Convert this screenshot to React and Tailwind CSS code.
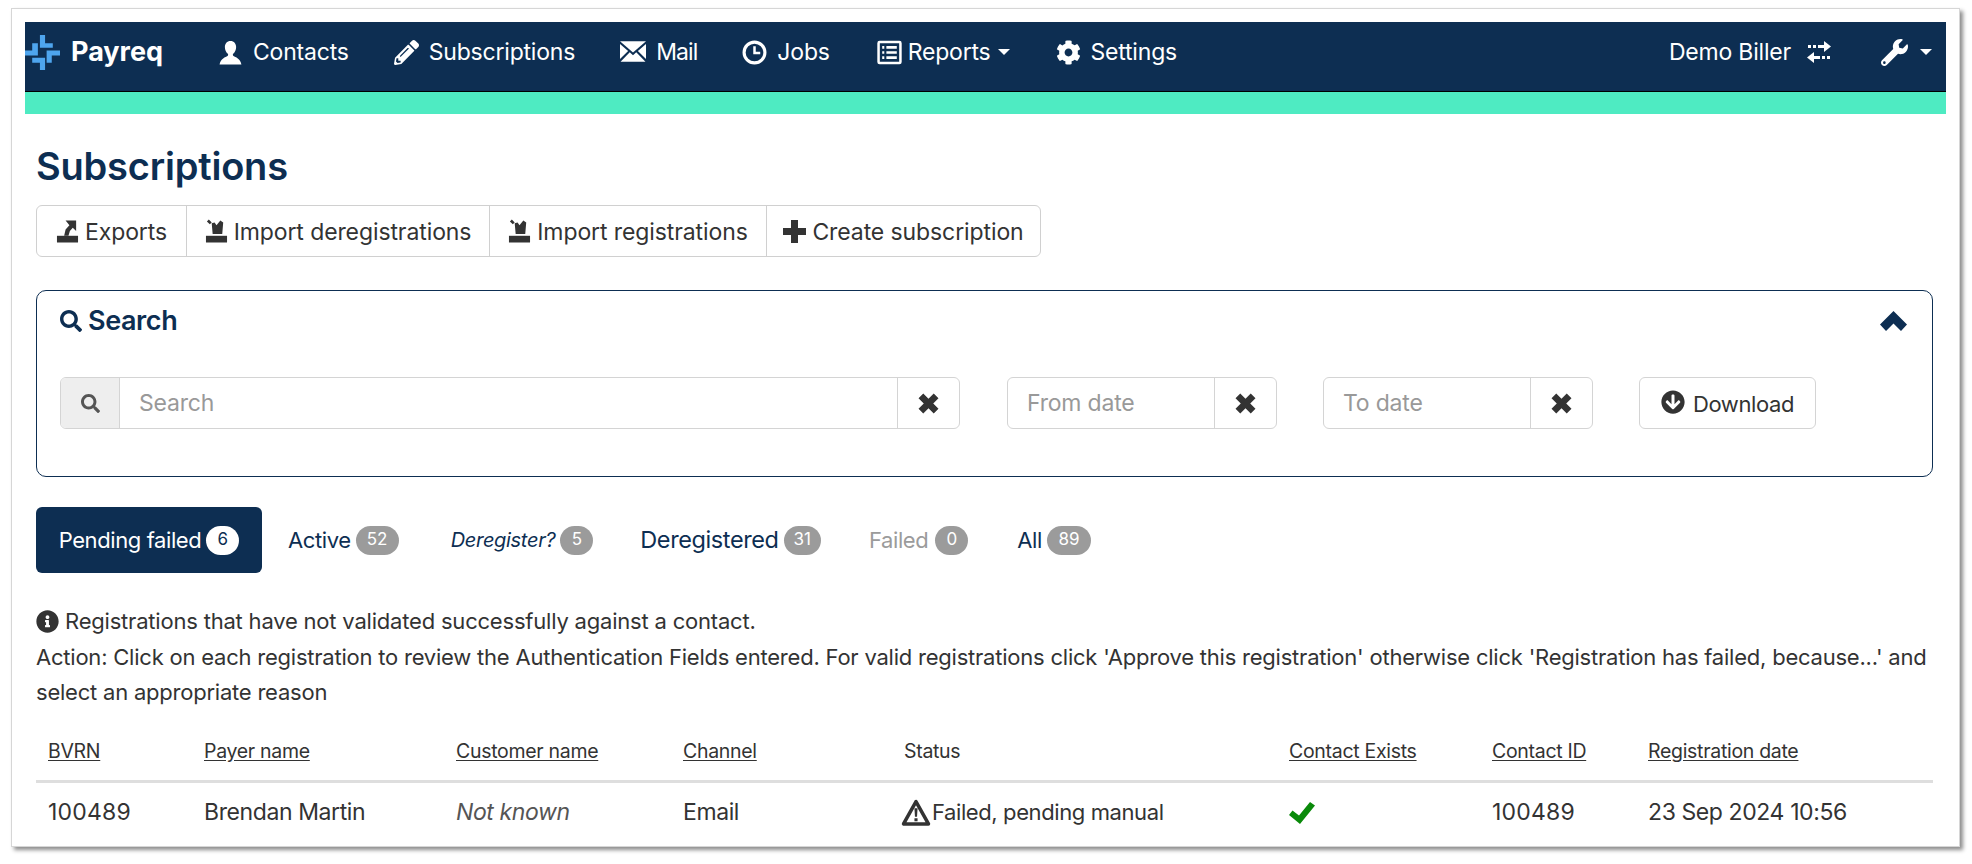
import React from "react";
import { FaCog, FaWrench, FaSearch, FaInfoCircle, FaArrowCircleDown, FaPencilAlt } from "react-icons/fa";

const NAVY = "text-[#0d2e52]";

function UserIcon() {
  return (
    <svg viewBox="0 0 24 24" className="w-[25px] h-[25px]" fill="currentColor">
      <path d="M12 1c-3.400 0-5.400 2.600-5.400 5.800 0 2.600 1 5 2.800 6.400.5.500.5 1.500-.3 2.100C7.300 16.500 2.500 17.500 1.500 23.500h21c-1-6-5.800-7-7.600-8.200-.8-.6-.8-1.600-.3-2.100 1.800-1.400 2.800-3.800 2.800-6.400C17.400 3.600 15.400 1 12 1z" />
    </svg>
  );
}

function MailIcon() {
  return (
    <svg viewBox="0 0 24 20" className="w-[26px] h-[22px]" fill="currentColor">
      <path d="M0 0h24L12 10.500 0 0z" />
      <path d="M0 2.500 7.500 9 0 16.500V2.500zM24 2.500 16.500 9 24 16.500V2.500z" />
      <path d="M9 10.300l3 2.700 3-2.700 8.500 8.700H.5L9 10.300z" />
    </svg>
  );
}

function ClockIcon() {
  return (
    <svg viewBox="0 0 24 24" className="w-[25px] h-[25px]" fill="none" stroke="currentColor">
      <circle cx="12" cy="12" r="10" strokeWidth="3" />
      <path d="M12 6v6.500h5.500" strokeWidth="2.400" />
    </svg>
  );
}

function ListIcon() {
  return (
    <svg viewBox="0 0 24 24" className="w-[25px] h-[25px]" fill="none" stroke="currentColor">
      <rect x="1.500" y="2" width="21" height="20" rx="1" strokeWidth="2.400" />
      <path d="M5 7h2M5 12h2M5 17h2M9 7h10M9 12h10M9 17h10" strokeWidth="2.600" />
    </svg>
  );
}

function LogoIcon() {
  return (
    <svg viewBox="0 0 34 34" className="w-[35px] h-[35px]" fill="#4ea5ee">
      <path d="M14.500 0h5v8h7.500v4.500H14.500z" />
      <path d="M7 8h5.500v12H0v-5h7z" />
      <path d="M21 15h13v5h-8v7h-5z" />
      <path d="M7 22h12.500v12h-5v-7H7z" />
    </svg>
  );
}

function TransferIcon() {
  return (
    <svg viewBox="0 0 24 22" className="w-[24px] h-[22px] ml-[16px]" fill="currentColor">
      <path d="M1 4h3v3H1zM6 4h3v3H6zM11 4h6V0l7 5.500-7 5.500V7h-6z" />
      <path d="M20 15h3v3h-3zM15 15h3v3h-3zM13 15H7v-4L0 16.500 7 22v-4h6z" />
    </svg>
  );
}

function ExportIcon() {
  return (
    <svg viewBox="0 0 24 24" className="w-[23px] h-[24px]" fill="#333">
      <path d="M10 1h11v11l-3.500-3.500-3 3.500-1.500 5H8.500l1.500-6.500 4-4.500z" />
      <path d="M1 17h22v7H1z" />
    </svg>
  );
}

function ImportIcon() {
  return (
    <svg viewBox="0 0 24 24" className="w-[23px] h-[24px]" fill="#333">
      <path d="M4 0l3 3-2 2-3-3zM7 4l3-1 2 3 4-5 3 2-1 12H8z" />
      <path d="M1 17h22v7H1z" />
    </svg>
  );
}

function PlusIcon() {
  return (
    <svg viewBox="0 0 23 23" className="w-[23px] h-[23px]" fill="#333">
      <path d="M8 0h7v8h8v7h-8v8H8v-8H0V8h8z" />
    </svg>
  );
}

function RemoveIcon() {
  return (
    <svg viewBox="0 0 20 20" className="w-[21px] h-[21px]" fill="currentColor">
      <path d="M5 0.500 10 5.500 15 0.500 19.500 5 14.500 10 19.500 15 15 19.500 10 14.500 5 19.500 0.500 15 5.500 10 0.500 5z" />
    </svg>
  );
}

function ChevronIcon() {
  return (
    <svg viewBox="0 0 27 20" className="w-[27px] h-[20px] mr-[2px]" fill="currentColor">
      <path d="M13.500 0 27 13.500 21 20 13.500 12.500 6 20 0 13.500z" />
    </svg>
  );
}

function WarningIcon() {
  return (
    <svg viewBox="0 0 28 26" className="w-[30px] h-[27px] ml-[-3px]">
      <path d="M14 2.500 2 24h24z" fill="none" stroke="#333" strokeWidth="3.400" strokeLinejoin="round" />
      <path d="M12.500 9h3l-.5 8h-2zM12.500 18.500h3v3h-3z" fill="#333" />
    </svg>
  );
}

function CheckIcon() {
  return (
    <svg viewBox="0 0 26 22" className="w-[26px] h-[22px]" fill="#0a8a0a">
      <path d="M21 0l5 3.500L11 22 0 13l3.500-4.500 6.500 5z" />
    </svg>
  );
}

function Caret({ className }) {
  return <span className={`inline-block w-0 h-0 border-x-[6px] border-x-transparent border-t-[6px] border-t-white ${className}`} />;
}

function NavItem({ icon, label, caret, gap = "gap-[10px]", className = "", labelClass = "tracking-[-0.2px]" }) {
  return (
    <div className={`flex items-center ${gap} ${className}`}>
      {icon}
      <span className={`text-[23px] ${labelClass}`}>{label}</span>
      {caret && <Caret className="ml-[1px]" />}
    </div>
  );
}

function Badge({ children, className = "bg-[#9b9b9b] text-white" }) {
  return (
    <span className={`h-[29px] min-w-[33px] px-[10px] rounded-full flex items-center justify-center text-[17px] ${className}`}>
      {children}
    </span>
  );
}

function Tab({ label, count, className, labelClass = "text-[22px] tracking-[-0.4px]", badgeClass }) {
  return (
    <div className={`flex items-center gap-[5px] ${className}`}>
      <span className={labelClass}>{label}</span>
      <Badge className={badgeClass}>{count}</Badge>
    </div>
  );
}

function ClearButton() {
  return (
    <div className="w-[62px] h-full shrink-0 flex items-center justify-center border-l border-[#d4d4d4] text-[#333]">
      <RemoveIcon />
    </div>
  );
}

function GroupButton({ icon, label, className }) {
  return (
    <div className={`h-full flex items-center justify-center gap-[6px] text-[23px] tracking-[-0.1px] text-[#333] ${className}`}>
      {icon}
      <span className="mt-[2px]">{label}</span>
    </div>
  );
}

const columns = "grid grid-cols-[156px_252px_227px_221px_385px_203px_156px_1fr] pl-[12px]";
const placeholder = "flex-1 pl-[19px] flex items-center text-[23px] tracking-[-0.2px] text-[#999]";

export default function App() {
  return (
    <div className="h-[864px] w-full bg-white overflow-hidden font-['Inter',sans-serif] pl-[11px] pr-[12px] pt-[8px]">
      <div className="h-[839px] border border-[#d6d6d6] bg-white shadow-[3px_3px_4px_rgba(0,0,0,0.45)] pt-[13px] px-[13px] overflow-hidden">
        <div className="h-[70px] bg-[#0d2e52] text-white flex items-start pt-[12px] border-b border-black">
          <div className="flex items-center h-[36px] w-[193px]">
            <LogoIcon />
            <span className="ml-[11px] text-[27px] font-bold">Payreq</span>
          </div>
          <div className="flex items-center h-[36px] gap-[45px]">
            <NavItem icon={<UserIcon />} label="Contacts" />
            <NavItem icon={<FaPencilAlt className="w-[25px] h-[25px]" />} label="Subscriptions" />
            <NavItem icon={<MailIcon />} label="Mail" labelClass="tracking-[-0.9px]" />
            <NavItem icon={<ClockIcon />} label="Jobs" />
            <NavItem icon={<ListIcon />} label="Reports" caret gap="gap-[6px]" className="ml-[2px]" />
            <NavItem icon={<FaCog className="w-[25px] h-[25px]" />} label="Settings" className="ml-[1px]" />
          </div>
          <div className="ml-auto flex items-center h-[36px] pr-[14px]">
            <span className="text-[23px] tracking-[-0.2px]">Demo Biller</span>
            <TransferIcon />
            <FaWrench className="ml-[50px] w-[27px] h-[27px]" />
            <Caret className="ml-[12px]" />
          </div>
        </div>
        <div className="h-[22px] bg-[#4eebc2]" />

        <div className="px-[11px]">
          <h1 className={`mt-[29px] h-[46px] flex items-center text-[38px] font-semibold tracking-[-0.2px] ${NAVY}`}>Subscriptions</h1>

          <div className="mt-[16px] w-[1005px] h-[52px] flex border border-[#d0d0d0] rounded-[6px]">
            <GroupButton icon={<ExportIcon />} label="Exports" className="w-[150px] border-r border-[#d0d0d0]" />
            <GroupButton icon={<ImportIcon />} label="Import deregistrations" className="w-[303px] border-r border-[#d0d0d0]" />
            <GroupButton icon={<ImportIcon />} label="Import registrations" className="w-[277px] border-r border-[#d0d0d0]" />
            <GroupButton icon={<PlusIcon />} label="Create subscription" className="flex-1" />
          </div>

          <div className="mt-[33px] h-[187px] mr-[2px] border border-[#0d2e52] rounded-[10px] px-[23px] pt-[9px]">
            <div className={`flex items-center justify-between h-[42px] ${NAVY}`}>
              <div className="flex items-center gap-[6px]">
                <FaSearch className="w-[22px] h-[22px]" />
                <span className="text-[27px] font-semibold tracking-[-0.4px]">Search</span>
              </div>
              <ChevronIcon />
            </div>
            <div className="mt-[35px] flex h-[52px]">
              <div className="w-[900px] h-full flex border border-[#d4d4d4] rounded-[6px] overflow-hidden">
                <div className="w-[59px] shrink-0 bg-[#eeeeee] border-r border-[#d4d4d4] flex items-center justify-center text-[#555]">
                  <FaSearch className="w-[19px] h-[19px]" />
                </div>
                <div className={placeholder}>Search</div>
                <ClearButton />
              </div>
              <div className="ml-[47px] w-[270px] h-full flex border border-[#d4d4d4] rounded-[6px]">
                <div className={placeholder}>From date</div>
                <ClearButton />
              </div>
              <div className="ml-[46px] w-[270px] h-full flex border border-[#d4d4d4] rounded-[6px]">
                <div className={placeholder}>To date</div>
                <ClearButton />
              </div>
              <div className="ml-[46px] w-[177px] h-full flex items-center justify-center gap-[8px] border border-[#d4d4d4] rounded-[6px] text-[22px] tracking-[-0.4px] text-[#333]">
                <FaArrowCircleDown className="w-[24px] h-[24px] mb-[2px]" />
                <span className="mt-[3px]">Download</span>
              </div>
            </div>
          </div>

          <div className={`mt-[30px] h-[66px] flex items-center ${NAVY}`}>
            <Tab label="Pending failed" count="6" className="w-[226px] h-full bg-[#0d2e52] rounded-[6px] text-white justify-center" badgeClass="bg-white text-[#0d2e52]" />
            <Tab label="Active" count="52" className="ml-[26px]" badgeClass="bg-[#9b9b9b] text-white min-w-[43px]" />
            <Tab label="Deregister?" count="5" className="ml-[52px]" labelClass="text-[20px] italic tracking-[-0.3px]" />
            <Tab label="Deregistered" count="31" className="ml-[47px]" labelClass="text-[23.5px] tracking-[-0.4px]" />
            <Tab label="Failed" count="0" className="ml-[48px] text-[#9b9b9b]" labelClass="text-[22px] tracking-[-0.4px] mr-[2px]" />
            <Tab label="All" count="89" className="ml-[49px]" badgeClass="bg-[#9b9b9b] text-white min-w-[44px]" />
          </div>

          <div className="mt-[31px] text-[22px] leading-[35.500px] tracking-[-0.2px] text-[#333]">
            <div className="flex items-center gap-[6px]">
              <FaInfoCircle className="w-[23px] h-[23px]" />
              <span>Registrations that have not validated successfully against a contact.</span>
            </div>
            <div className="tracking-[-0.22px]">Action: Click on each registration to review the Authentication Fields entered. For valid registrations click 'Approve this registration' otherwise click 'Registration has failed, because...' and select an appropriate reason</div>
          </div>

          <div className="mt-[12px] mr-[2px] text-[#333]">
            <div className={`${columns} h-[60px] pt-[2px] items-center text-[19.5px] tracking-[-0.3px] border-b-[3px] border-[#dedede]`}>
              <span className="underline underline-offset-2">BVRN</span>
              <span className="underline underline-offset-2">Payer name</span>
              <span className="underline underline-offset-2">Customer name</span>
              <span className="underline underline-offset-2">Channel</span>
              <span>Status</span>
              <span className="underline underline-offset-2">Contact Exists</span>
              <span className="underline underline-offset-2">Contact ID</span>
              <span className="underline underline-offset-2">Registration date</span>
            </div>
            <div className={`${columns} h-[60px] items-center text-[23px] tracking-[-0.4px]`}>
              <span className="tracking-[0.2px]">100489</span>
              <span>Brendan Martin</span>
              <span className="italic text-[#555]">Not known</span>
              <span>Email</span>
              <span className="flex items-center gap-[1px] text-[22px]"><WarningIcon />Failed, pending manual</span>
              <span><CheckIcon /></span>
              <span className="tracking-[0.2px]">100489</span>
              <span>23 Sep 2024 10:56</span>
            </div>
          </div>
        </div>
      </div>
    </div>
  );
}
